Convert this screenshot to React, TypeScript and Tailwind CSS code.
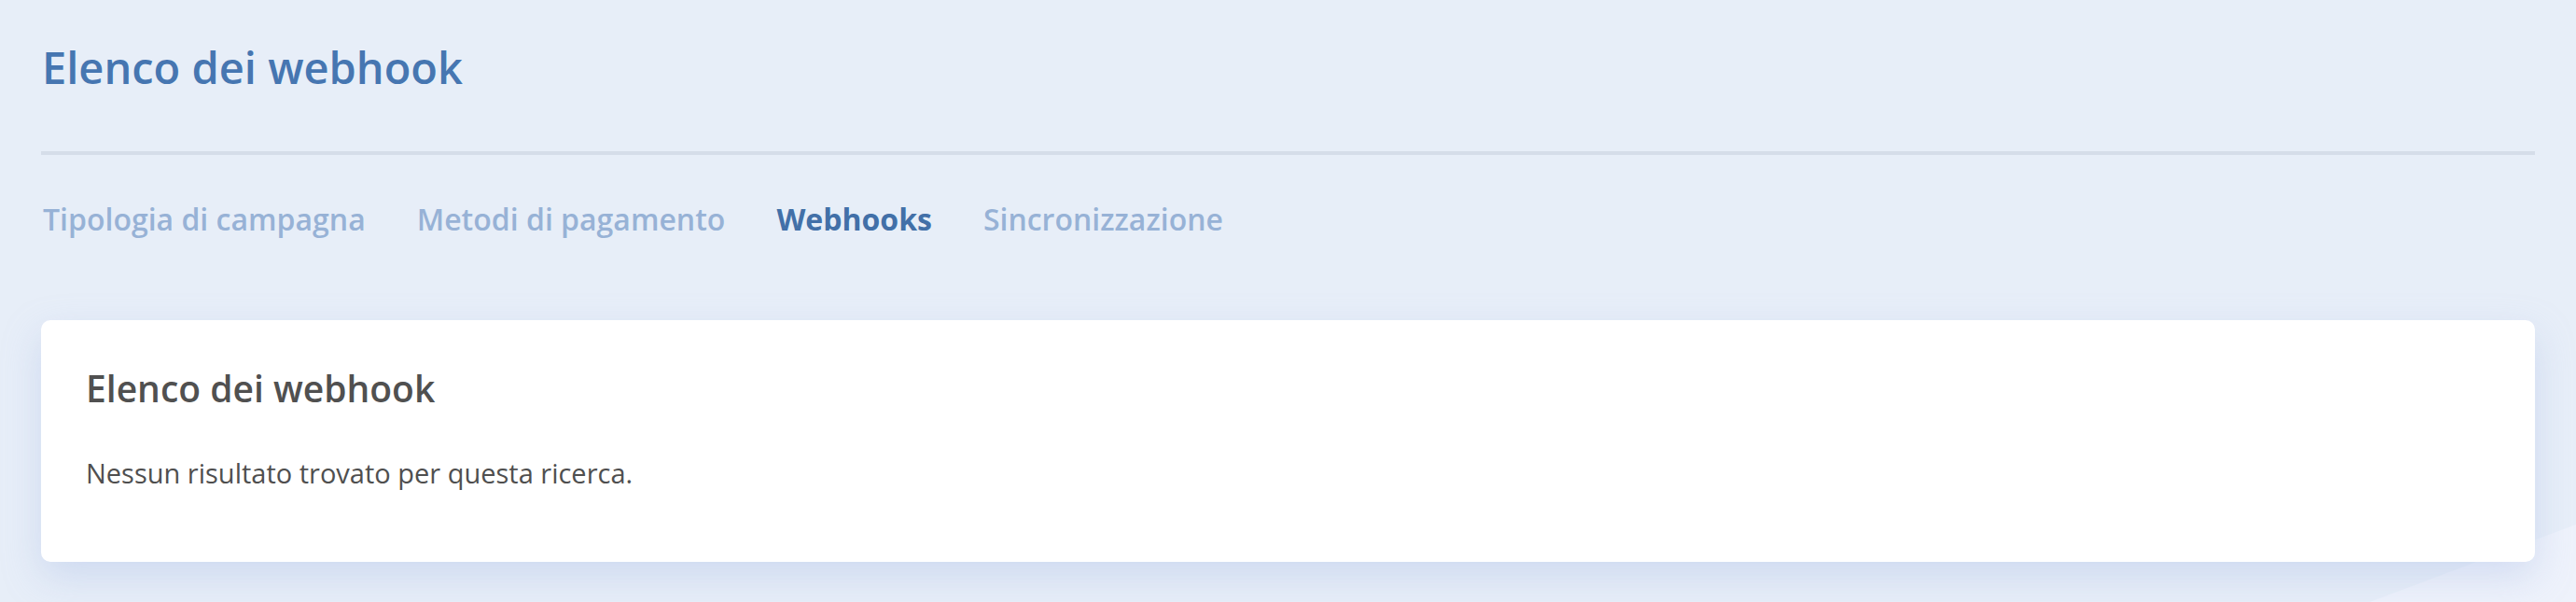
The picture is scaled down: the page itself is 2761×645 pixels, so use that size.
export default function App() {
  const tabs = [
    { label: "Tipologia di campagna", active: false },
    { label: "Metodi di pagamento", active: false },
    { label: "Webhooks", active: true },
    { label: "Sincronizzazione", active: false },
  ];

  return (
    <div className="relative min-h-[645px] overflow-hidden bg-[#e7eef8] font-['Open_Sans',sans-serif]">
      {/* decorative background shape */}
      <svg
        className="absolute bottom-0 right-0"
        width="221"
        height="83"
        viewBox="0 0 221 83"
      >
        <polygon points="0,83 221,0 221,83" fill="#eef2fb" />
      </svg>

      <div className="relative px-[44px] pt-[42px]">
        <h1 className="pl-[1px] text-[47px] leading-[60px] font-semibold text-[#4676b1]">
          Elenco dei webhook
        </h1>

        <div className="mt-[60px] h-[4px] bg-[#d5dde9]" />

        <nav className="mt-[49px] flex gap-[55px] pl-[2px]">
          {tabs.map((t) => (
            <span
              key={t.label}
              className={
                t.active
                  ? "text-[32px] leading-[40px] font-bold text-[#4270a8]"
                  : "text-[32px] leading-[40px] font-semibold text-[#97b2d6]"
              }
            >
              {t.label}
            </span>
          ))}
        </nav>

        <div className="mt-[88px] rounded-[10px] bg-white px-[48px] pt-[50px] pb-[77px] shadow-[0_16px_40px_rgba(160,180,225,0.35)]">
          <h2 className="text-[39px] leading-[45px] font-semibold text-[#505050]">
            Elenco dei webhook
          </h2>
          <p className="mt-[51px] text-[29px] leading-[36px] text-[#4f4f4f]">
            Nessun risultato trovato per questa ricerca.
          </p>
        </div>
      </div>
    </div>
  );
}
